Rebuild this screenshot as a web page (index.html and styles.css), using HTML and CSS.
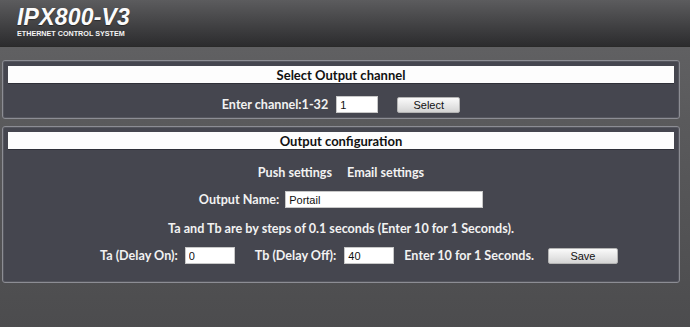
FILE: index.html
```html
<!DOCTYPE html>
<html>
<head>
<meta charset="utf-8">
<link rel="stylesheet" href="styles.css">
</head>
<body>
<header class="top">
  <div class="logo">IPX800-V3</div>
  <div class="tagline">ETHERNET CONTROL SYSTEM</div>
</header>
<main class="content">
  <section class="panel panel-select">
    <div class="panel-title">Select Output channel</div>
    <div class="row row-channel">
      <span class="label">Enter channel:1-32</span>
      <input class="field field-channel" type="text" value="1">
      <button class="btn btn-select">Select</button>
    </div>
  </section>
  <section class="panel panel-config">
    <div class="panel-title">Output configuration</div>
    <div class="row row-links">
      <a class="link">Push settings</a>
      <a class="link">Email settings</a>
    </div>
    <div class="row row-name">
      <span class="label">Output Name:</span>
      <input class="field field-name" type="text" value="Portail">
    </div>
    <div class="row row-note">Ta and Tb are by steps of 0.1 seconds (Enter 10 for 1 Seconds).</div>
    <div class="row row-delay">
      <span class="label">Ta (Delay On):</span>
      <input class="field field-delay" type="text" value="0">
      <span class="label label-tb">Tb (Delay Off):</span>
      <input class="field field-delay" type="text" value="40">
      <span class="label label-hint">Enter 10 for 1 Seconds.</span>
      <button class="btn btn-save">Save</button>
    </div>
  </section>
</main>
</body>
</html>
```
FILE: styles.css
```css
html, body {
  margin: 0;
  padding: 0;
}
body {
  width: 690px;
  height: 327px;
  overflow: hidden;
  background: linear-gradient(#646466 0px, #5a5a5c 120px, #4c4c4e 327px);
  font-family: Lato, "Liberation Sans", Arial, sans-serif;
  color: #f2f2f2;
}
.top {
  height: 47px;
  box-sizing: border-box;
  padding: 5px 0 0 17px;
  background: linear-gradient(#5c5c5e, #3a3a3c 70%, #2c2c2e);
  border-bottom: 1px solid #2a2a2a;
}
.logo {
  font-family: "Liberation Sans", Arial, sans-serif;
  font-weight: bold;
  font-style: italic;
  font-size: 23px;
  line-height: 24px;
  color: #fbfbfb;
  letter-spacing: 0.2px;
  text-shadow: 0 1px 1px rgba(0,0,0,0.4);
}
.tagline {
  font-family: "Liberation Sans", Arial, sans-serif;
  font-weight: bold;
  font-size: 7.2px;
  line-height: 9px;
  color: #f4f4f4;
}
.content {
  padding: 13px 10px 0 2px;
}
.panel {
  background: #45464f;
  border: 1px solid #8c8d94;
  border-radius: 3px;
  padding: 5px;
  box-shadow: inset 0 0 0 1px #55565e;
}
.panel-config {
  margin-top: 7px;
  padding-bottom: 18px;
}
.panel-title {
  background: #fdfdfd;
  color: #111;
  font-weight: bold;
  font-size: 13px;
  line-height: 18px;
  height: 18px;
  text-align: center;
  border-bottom: 1px solid #2f3038;
  box-sizing: border-box;
}
.row {
  display: flex;
  justify-content: center;
  align-items: center;
  font-weight: bold;
  font-size: 12.6px;
}
.row-channel {
  margin-top: 12px;
  height: 17px;
}
.field {
  font-family: "Liberation Sans", Arial, sans-serif;
  font-size: 11px;
  color: #111;
  background: #fff;
  border: 1px solid #c8c8c8;
  height: 17px;
  box-sizing: border-box;
  padding: 0 3px;
  margin: 0;
  outline: none;
}
.field-channel {
  width: 42px;
  margin-left: 8px;
}
.btn {
  font-family: "Liberation Sans", Arial, sans-serif;
  font-size: 11px;
  color: #111;
  height: 16px;
  padding: 0;
  border: 1px solid #b4b4b4;
  border-radius: 2px;
  background: linear-gradient(#fafafa, #e4e4e4 60%, #d4d4d4);
  box-sizing: border-box;
}
.btn-select {
  width: 63px;
  margin-left: 19px;
}
.row-links {
  margin-top: 14px;
  height: 16px;
  gap: 15px;
}
.link {
  color: #f2f2f2;
  cursor: pointer;
}
.row-name {
  margin-top: 11px;
  height: 17px;
}
.field-name {
  width: 198px;
  margin-left: 6px;
}
.row-note {
  margin-top: 12px;
  height: 16px;
}
.row-delay {
  margin-top: 11px;
  height: 17px;
  padding-left: 36px;
}
.field-delay {
  width: 50px;
  margin-left: 7px;
}
.label-tb {
  margin-left: 20px;
}
.label-tb + .field-delay {
  margin-left: 8px;
}
.label-hint {
  margin-left: 10px;
}
.btn-save {
  width: 70px;
  margin-left: 14px;
}
```
